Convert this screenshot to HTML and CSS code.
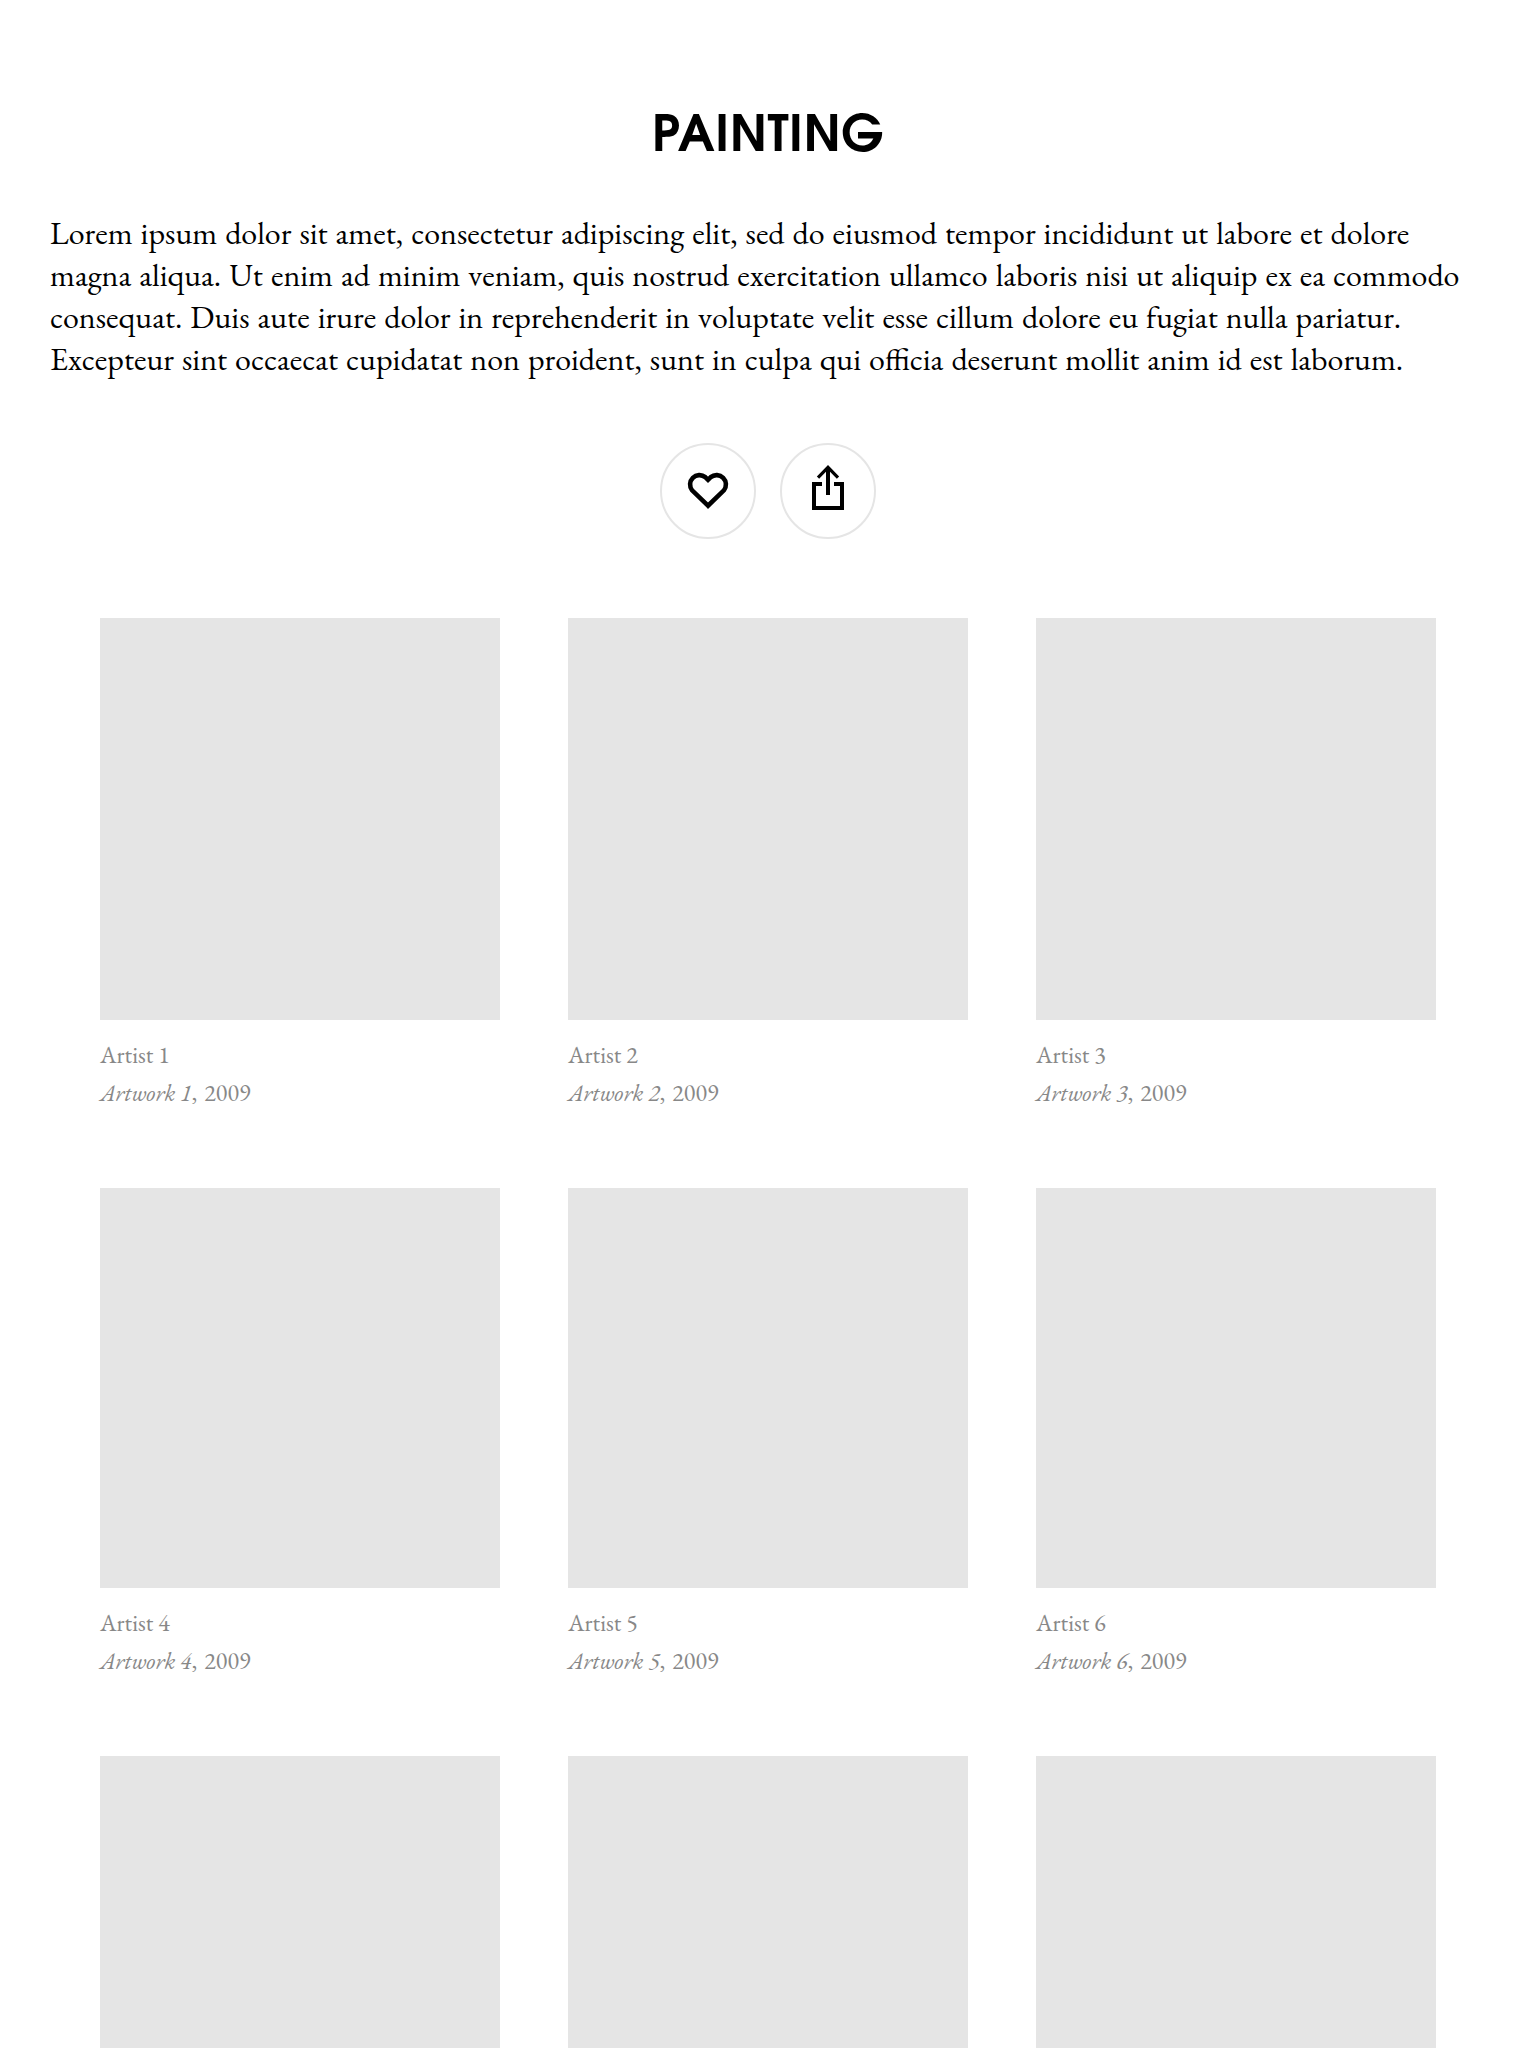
FILE: index.html
```html
<!DOCTYPE html>
<html lang="en">
<head>
<meta charset="utf-8">
<title>Painting</title>
<link rel="stylesheet" href="styles.css">
</head>
<body>
<header class="intro">
  <h1 class="title">PAINTING</h1>
  <p class="description">Lorem ipsum dolor sit amet, consectetur adipiscing elit, sed do eiusmod tempor incididunt ut labore et dolore magna aliqua. Ut enim ad minim veniam, quis nostrud exercitation ullamco laboris nisi ut aliquip ex ea commodo consequat. Duis aute irure dolor in reprehenderit in voluptate velit esse cillum dolore eu fugiat nulla pariatur. Excepteur sint occaecat cupidatat non proident, sunt in culpa qui officia deserunt mollit anim id est laborum.</p>
  <div class="actions">
    <button class="action" aria-label="Favorite">
      <svg class="icon" viewBox="0 0 92 92"><path stroke-width="4.6" d="M46 60.7 L30.1 45.3 A9.4 9.4 0 0 1 43.3 32.1 L46 34.8 L48.7 32.1 A9.4 9.4 0 0 1 61.9 45.3 Z"/></svg>
    </button>
    <button class="action" aria-label="Share">
      <svg class="icon" viewBox="0 0 92 92"><path stroke-width="4" d="M40 39 H32 V63 H60 V39 H52 M46 50 V23"/><path stroke-width="3.2" d="M36 32.7 L46 22.3 L56 32.7"/></svg>
    </button>
  </div>
</header>
<main class="grid">
  <article class="work"><div class="image image-first"></div><p class="caption">Artist 1</p><p class="caption"><em>Artwork 1</em><span class="year">, 2009</span></p></article>
  <article class="work"><div class="image image-first"></div><p class="caption">Artist 2</p><p class="caption"><em>Artwork 2</em><span class="year">, 2009</span></p></article>
  <article class="work"><div class="image image-first"></div><p class="caption">Artist 3</p><p class="caption"><em>Artwork 3</em><span class="year">, 2009</span></p></article>
  <article class="work"><div class="image"></div><p class="caption">Artist 4</p><p class="caption"><em>Artwork 4</em><span class="year">, 2009</span></p></article>
  <article class="work"><div class="image"></div><p class="caption">Artist 5</p><p class="caption"><em>Artwork 5</em><span class="year">, 2009</span></p></article>
  <article class="work"><div class="image"></div><p class="caption">Artist 6</p><p class="caption"><em>Artwork 6</em><span class="year">, 2009</span></p></article>
  <article class="work"><div class="image image-last"></div></article>
  <article class="work"><div class="image image-last"></div></article>
  <article class="work"><div class="image image-last"></div></article>
</main>
</body>
</html>
```
FILE: styles.css
```css
* { box-sizing: border-box; }

body {
  margin: 0;
  background: #fff;
  color: #000;
  font-family: "EB Garamond", "Liberation Serif", serif;
}

.intro {
  height: 618px;
  padding: 107px 50px 0;
}

.title {
  margin: 0;
  height: 60px;
  font: 700 50px/60px "ITC Avant Garde Gothic", "URW Gothic", "TeX Gyre Adventor", "League Spartan", Jost, Outfit, Urbanist, Poppins, Montserrat, Lato, sans-serif;
  letter-spacing: 0.6px;
  text-align: center;
}

.description {
  margin: 45px 0 0;
  font-size: 32px;
  line-height: 42px;
  font-kerning: none;
  word-spacing: 1.6px;
}

.actions {
  display: flex;
  justify-content: center;
  gap: 24px;
  margin-top: 63px;
}

.action {
  width: 96px;
  height: 96px;
  padding: 0;
  border: 2px solid #e5e5e5;
  border-radius: 50%;
  background: #fff;
}

.icon {
  display: block;
  width: 92px;
  height: 92px;
  fill: none;
  stroke: #000;
}

.grid {
  display: grid;
  grid-template-columns: repeat(3, 400px);
  column-gap: 68px;
  row-gap: 76px;
  padding: 0 100px;
}

.image {
  height: 400px;
  margin-bottom: 16px;
  background: #e5e5e5;
}

.image-first { height: 402px; }

.image-last {
  height: 292px;
  margin-bottom: 0;
}

.caption {
  margin: 0;
  color: #888;
  font-size: 24px;
  line-height: 38px;
}

.year { word-spacing: 2.2px; }
```
